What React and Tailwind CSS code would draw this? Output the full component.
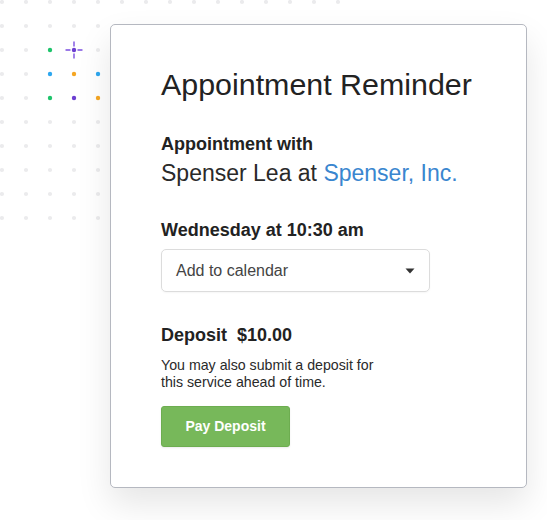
import React from "react";

const cols = Array.from({ length: 15 }, (_, i) => 2 + i * 24);
const rows = Array.from({ length: 10 }, (_, i) => 2 + i * 24);

const colored = {
  "50-50": "#1ec46b",
  "74-50": "#6c3fd1",
  "50-74": "#2ea7ef",
  "74-74": "#f5a623",
  "98-74": "#2ea7ef",
  "50-98": "#1ec46b",
  "74-98": "#6c3fd1",
  "98-98": "#f5a623",
};

const DotGrid = () => (
  <svg className="absolute left-0 top-0" width="547" height="230" viewBox="0 0 547 230">
    {rows.map((y) =>
      cols.map((x) => {
        const c = colored[`${x}-${y}`];
        return <circle key={`${x}-${y}`} cx={x} cy={y} r={c ? 2.2 : 2.1} fill={c || "#ebebed"} />;
      })
    )}
    {/* sparkle on the purple dot */}
    <g stroke="#7b4fe0" strokeWidth="1.4" strokeLinecap="round">
      <line x1="74" y1="42" x2="74" y2="46" />
      <line x1="74" y1="54" x2="74" y2="58" />
      <line x1="66" y1="50" x2="70" y2="50" />
      <line x1="78" y1="50" x2="82" y2="50" />
    </g>
  </svg>
);

const App = () => {
  return (
    <div
      className="relative w-[547px] h-[520px] bg-white overflow-hidden"
      style={{ fontFamily: '"Liberation Sans", Arial, sans-serif' }}
    >
      <DotGrid />

      <div className="relative ml-[110px] mt-[24px] w-[417px] h-[464px] bg-white border border-[#b5b8c0] rounded-[5px] shadow-[0_16px_34px_rgba(0,0,0,0.1)] pl-[50px] pt-[41px]">
        <h1 className="text-[30.4px] leading-[36px] text-[#222] font-normal">Appointment Reminder</h1>

        <div className="mt-[31px] text-[18px] leading-[22px] font-bold text-[#222]">Appointment with</div>
        <div className="mt-[4px] text-[23px] leading-[28px] text-[#2a2a2a]">
          Spenser Lea at <span className="text-[#3a86cf]">Spenser, Inc.</span>
        </div>

        <div className="mt-[32px] text-[18px] leading-[22px] font-bold text-[#222]">Wednesday at 10:30 am</div>

        <div className="mt-[8px] w-[269px] h-[43px] flex items-center justify-between border border-[#dcdcdc] rounded-[5px] pl-[14px] pr-[14px] shadow-[0_1px_2px_rgba(0,0,0,0.04)]">
          <span className="text-[16px] leading-[20px] text-[#444]">Add to calendar</span>
          <svg width="10" height="6" viewBox="0 0 10 6">
            <path d="M0.5 0.5 L9.5 0.5 L5 5.5 Z" fill="#333" />
          </svg>
        </div>

        <div className="mt-[32px] text-[18px] leading-[22px] font-bold text-[#222]">Deposit&nbsp; $10.00</div>

        <p className="mt-[11px] w-[228px] text-[14.2px] leading-[17px] text-[#2a2a2a]">
          You may also submit a deposit for this service ahead of time.
        </p>

        <button className="mt-[15px] w-[129px] h-[41px] flex items-center justify-center bg-[#77b85a] border border-[#6dad50] rounded-[3px] text-white text-[14px] leading-[17px] font-bold shadow-[0_1px_2px_rgba(0,0,0,0.08)]">
          Pay Deposit
        </button>
      </div>
    </div>
  );
};

export default App;
